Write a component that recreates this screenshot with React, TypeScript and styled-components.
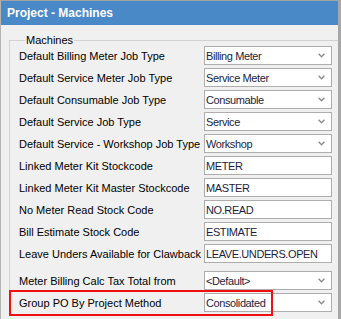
import React from "react"
import styled, { createGlobalStyle } from "styled-components"

const GlobalStyle = createGlobalStyle`
  html, body {
    margin: 0;
    padding: 0;
    background: #f0f0f0;
  }
  body {
    font-family: "Liberation Sans", Arial, sans-serif;
  }
`

const Window = styled.div`
  box-sizing: border-box;
  width: 341px;
  height: 319px;
  overflow: hidden;
  background: #f0f0f0;
  border-top: 1px solid #a3a3a3;
  border-left: 1px solid #b4b4b4;
  border-right: 3px solid #a7a7a7;
`

const TitleBar = styled.div`
  height: 24px;
  display: flex;
  align-items: center;
  padding-left: 6px;
  background: #4a89c8;
  color: #ffffff;
  font-size: 12px;
  font-weight: bold;
`

const Body = styled.div`
  padding: 9px 0 0 8px;
`

const GroupBox = styled.fieldset`
  margin: 0;
  padding: 0 0 0 9px;
  border: 1px solid #d2d2d2;
  border-right: none;
  border-bottom: none;
  min-width: 0;
`

const Legend = styled.legend`
  margin-left: 6px;
  padding: 0 1px;
  font-size: 11px;
  line-height: 12px;
  color: #000000;
`

const Rows = styled.div`
  display: flex;
  flex-direction: column;
  gap: 3px;
`

const Row = styled.div<{ $spaced?: boolean }>`
  position: relative;
  display: grid;
  grid-template-columns: 185px 128px;
  align-items: center;
  height: 19px;
  margin-top: ${p => (p.$spaced ? "5px" : "0")};
`

const Label = styled.span`
  font-size: 11px;
  color: #000000;
  white-space: nowrap;
`

const Field = styled.div`
  box-sizing: border-box;
  height: 19px;
  display: flex;
  align-items: center;
  justify-content: space-between;
  padding: 0 6px 0 1px;
  background: #ffffff;
  border: 1px solid #adadad;
  font-size: 11px;
  letter-spacing: -0.4px;
  color: #1d1d40;
  white-space: nowrap;
`

const Chevron = styled.svg`
  width: 7px;
  height: 5px;
  flex: none;
`

const Highlight = styled.div`
  position: absolute;
  left: -10px;
  top: -3px;
  width: 264px;
  height: 26px;
  box-sizing: border-box;
  border: 2px solid #f01010;
  pointer-events: none;
`

type Setting = {
  label: string
  value: string
  dropdown?: boolean
  spaced?: boolean
  highlighted?: boolean
}

const settings: Setting[] = [
  { label: "Default Billing Meter Job Type", value: "Billing Meter", dropdown: true },
  { label: "Default Service Meter Job Type", value: "Service Meter", dropdown: true },
  { label: "Default Consumable Job Type", value: "Consumable", dropdown: true },
  { label: "Default Service Job Type", value: "Service", dropdown: true },
  { label: "Default Service - Workshop Job Type", value: "Workshop", dropdown: true },
  { label: "Linked Meter Kit Stockcode", value: "METER" },
  { label: "Linked Meter Kit Master Stockcode", value: "MASTER" },
  { label: "No Meter Read Stock Code", value: "NO.READ" },
  { label: "Bill Estimate Stock Code", value: "ESTIMATE" },
  { label: "Leave Unders Available for Clawback", value: "LEAVE.UNDERS.OPEN" },
  { label: "Meter Billing Calc Tax Total from", value: "<Default>", dropdown: true, spaced: true },
  { label: "Group PO By Project Method", value: "Consolidated", dropdown: true, highlighted: true },
]

function DownArrow() {
  return (
    <Chevron viewBox="0 0 7 5">
      <path d="M0.6 0.8 L3.5 3.8 L6.4 0.8" fill="none" stroke="#8c8c8c" strokeWidth="1.4" />
    </Chevron>
  )
}

export default function App() {
  return (
    <>
      <GlobalStyle />
      <Window>
        <TitleBar>Project - Machines</TitleBar>
        <Body>
          <GroupBox>
            <Legend>Machines</Legend>
            <Rows>
              {settings.map(s => (
                <Row key={s.label} $spaced={s.spaced}>
                  <Label>{s.label}</Label>
                  <Field>
                    <span>{s.value}</span>
                    {s.dropdown && <DownArrow />}
                  </Field>
                  {s.highlighted && <Highlight />}
                </Row>
              ))}
            </Rows>
          </GroupBox>
        </Body>
      </Window>
    </>
  )
}
